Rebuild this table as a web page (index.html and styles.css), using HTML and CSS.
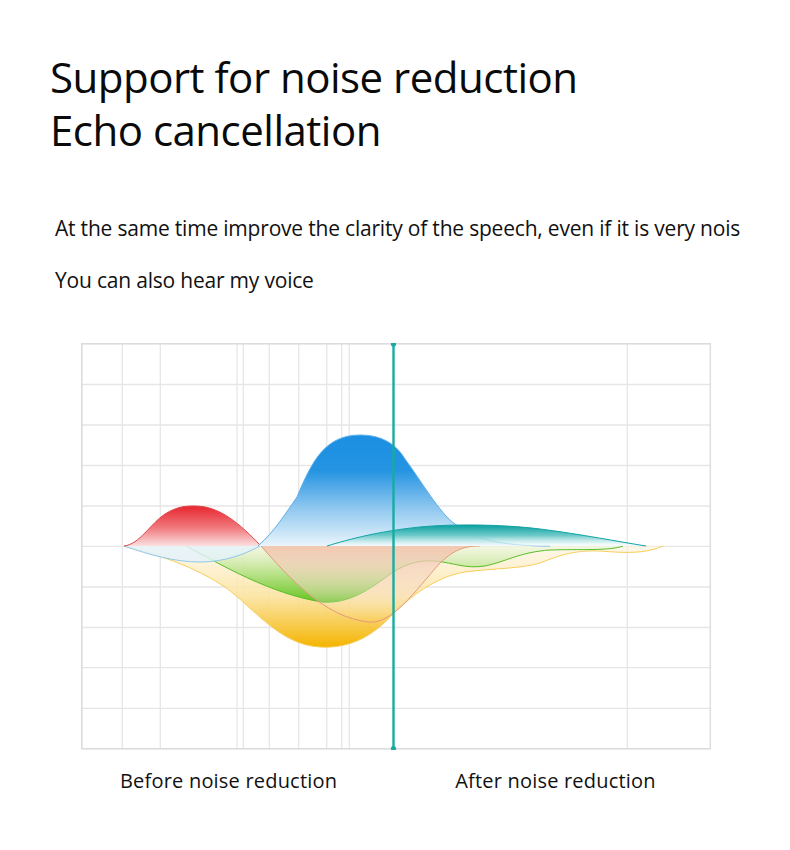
FILE: index.html
```html
<!DOCTYPE html>
<html lang="en">
<head>
<meta charset="utf-8">
<title>Noise reduction</title>
<link rel="stylesheet" href="styles.css">
</head>
<body>
<div class="page">
  <h1 class="title">Support for noise reduction<br>Echo cancellation</h1>
  <p class="lead first">At the same time improve the clarity of the speech, even if it is very nois</p>
  <p class="lead second">You can also hear my voice</p>
  <div class="chart">
    <svg width="630" height="407" viewBox="81 344 630 407" xmlns="http://www.w3.org/2000/svg">
      <defs>
        <linearGradient id="gRed" x1="0" y1="507" x2="0" y2="547" gradientUnits="userSpaceOnUse">
          <stop offset="0" stop-color="#e8262f"/>
          <stop offset="0.55" stop-color="#f07a7e"/>
          <stop offset="1" stop-color="#fbe0e0"/>
        </linearGradient>
        <linearGradient id="gPeach" x1="0" y1="547" x2="0" y2="622" gradientUnits="userSpaceOnUse">
          <stop offset="0" stop-color="#f2c3ac" stop-opacity="0.9"/>
          <stop offset="0.6" stop-color="#f6dccd" stop-opacity="0.45"/>
          <stop offset="1" stop-color="#fbeee6" stop-opacity="0"/>
        </linearGradient>
        <linearGradient id="gBlue" x1="0" y1="436" x2="0" y2="547" gradientUnits="userSpaceOnUse">
          <stop offset="0" stop-color="#1b8fe2"/>
          <stop offset="0.32" stop-color="#2494e2"/>
          <stop offset="0.65" stop-color="#8cc6ef"/>
          <stop offset="1" stop-color="#eaf5fc"/>
        </linearGradient>
        <linearGradient id="gTeal" x1="0" y1="526" x2="0" y2="547" gradientUnits="userSpaceOnUse">
          <stop offset="0" stop-color="#0a9fa0"/>
          <stop offset="0.5" stop-color="#6fcaca"/>
          <stop offset="1" stop-color="#ffffff" stop-opacity="0.6"/>
        </linearGradient>
        <linearGradient id="gGreen" x1="0" y1="547" x2="0" y2="603" gradientUnits="userSpaceOnUse">
          <stop offset="0" stop-color="#eaf6dc" stop-opacity="0.5"/>
          <stop offset="0.45" stop-color="#b9e38c" stop-opacity="0.9"/>
          <stop offset="1" stop-color="#66c522"/>
        </linearGradient>
        <linearGradient id="gYellow" x1="0" y1="547" x2="0" y2="648" gradientUnits="userSpaceOnUse">
          <stop offset="0" stop-color="#fdf3dc" stop-opacity="0.6"/>
          <stop offset="0.5" stop-color="#fbe39e" stop-opacity="0.9"/>
          <stop offset="1" stop-color="#f4b400"/>
        </linearGradient>
      </defs>

      <g class="grid">
        <line x1="81" y1="385.5" x2="710" y2="385.5"/>
        <line x1="81" y1="426" x2="710" y2="426"/>
        <line x1="81" y1="466.5" x2="710" y2="466.5"/>
        <line x1="81" y1="507" x2="710" y2="507"/>
        <line x1="81" y1="547.3" x2="710" y2="547.3"/>
        <line x1="81" y1="588" x2="710" y2="588"/>
        <line x1="81" y1="628.5" x2="710" y2="628.5"/>
        <line x1="81" y1="668.7" x2="710" y2="668.7"/>
        <line x1="81" y1="709.3" x2="710" y2="709.3"/>
        <line x1="122.3" y1="345" x2="122.3" y2="750"/>
        <line x1="160.3" y1="345" x2="160.3" y2="750"/>
        <line x1="237" y1="345" x2="237" y2="750"/>
        <line x1="243.3" y1="345" x2="243.3" y2="750"/>
        <line x1="269.3" y1="345" x2="269.3" y2="750"/>
        <line x1="298.7" y1="345" x2="298.7" y2="750"/>
        <line x1="326.7" y1="345" x2="326.7" y2="750"/>
        <line x1="341.7" y1="345" x2="341.7" y2="750"/>
        <line x1="349.3" y1="345" x2="349.3" y2="750"/>
        <line x1="627.3" y1="345" x2="627.3" y2="750"/>
        <rect class="frame" x="81.8" y="344.8" width="628.6" height="405"/>
      </g>

      <!-- yellow lobe -->
      <path fill="url(#gYellow)" d="M124,547 C160,556 195,568 225,588 C255,610 280,646 320,648 C352,650 375,635 393,615 C410,598 435,578 465,573 C495,569 520,570 540,564 C560,556 575,551 600,552 C625,554 645,555 663,547 Z"/>
      <path class="ln" stroke="#f5cf5c" d="M124,547 C160,556 195,568 225,588 C255,610 280,646 320,648 C352,650 375,635 393,615 C410,598 435,578 465,573 C495,569 520,570 540,564 C560,556 575,551 600,552 C625,554 645,555 663,547"/>

      <!-- green lobe -->
      <path fill="url(#gGreen)" d="M186,547 C220,565 270,595 322,603 C350,605 370,590 393,573 C408,564 420,561 435,562 C455,564 465,570 485,567 C505,563 520,553 550,551 C580,550 610,552 623,547 Z"/>
      <path class="ln" stroke="#58be2a" stroke-width="1.3" d="M186,547 C220,565 270,595 322,603 C350,605 370,590 393,573 C408,564 420,561 435,562 C455,564 465,570 485,567 C505,563 520,553 550,551 C580,550 610,552 623,547"/>

      <!-- red negative lobe -->
      <path fill="url(#gPeach)" d="M261,547 C290,580 325,618 368,623 C392,626 415,592 440,564 C455,550 465,547 480,547 Z"/>
      <path class="ln" stroke="#e59a7c" d="M261,547 C290,580 325,618 368,623 C392,626 415,592 440,564 C455,550 465,547 480,547"/>

      <!-- blue under baseline -->
      <path fill="#e3f2fb" fill-opacity="0.8" d="M124,547 C150,556 175,563 200,563 C225,563 245,555 260,547 Z"/>
      <path class="ln" stroke="#8fc9ee" d="M124,547 C150,556 175,563 200,563 C225,563 245,555 260,547"/>

      <!-- red positive lobe -->
      <path fill="url(#gRed)" d="M124,547 C140,545 150,525 165,515 C178,507 186,507 195,507 C220,507 240,525 261,547 Z"/>
      <path class="ln" stroke="#e0464c" stroke-width="1.2" d="M124,547 C140,545 150,525 165,515 C178,507 186,507 195,507 C220,507 240,525 261,547"/>

      <!-- blue lobe -->
      <path fill="url(#gBlue)" d="M258,547 C275,532 285,515 297,498 C312,462 325,436 360,436 C385,436 398,448 405,460 C420,480 440,515 455,525 C475,540 500,547 550,547 Z"/>
      <path class="ln" stroke="#5eb0ea" d="M258,547 C275,532 285,515 297,498 C312,462 325,436 360,436 C385,436 398,448 405,460 C420,480 440,515 455,525 C475,540 500,547 550,547"/>

      <!-- teal lobe -->
      <path fill="url(#gTeal)" d="M327,547 C350,540 380,532 420,528 C450,525 500,525 540,530 C580,535 620,543 646,547 Z"/>
      <path class="ln" stroke="#10a3a3" stroke-width="1.4" d="M327,547 C350,540 380,532 420,528 C450,525 500,525 540,530 C580,535 620,543 646,547"/>

      <!-- divider -->
      <line class="divider" x1="393.5" y1="345" x2="393.5" y2="750"/>
      <circle class="dot" cx="393.5" cy="345" r="2.6"/>
      <circle class="dot" cx="393.5" cy="749.5" r="2.6"/>
    </svg>
  </div>
  <div class="labels">
    <span class="label before">Before noise reduction</span>
    <span class="label after">After noise reduction</span>
  </div>
</div>
</body>
</html>
```

FILE: styles.css
```css
html, body {
  margin: 0;
  padding: 0;
  background: #ffffff;
}

body {
  font-family: "Open Sans", "Noto Sans", sans-serif;
  color: #111111;
}

.page {
  width: 790px;
  height: 850px;
  overflow: hidden;
}

.title {
  margin: 50px 0 0 0;
  padding-left: 50px;
  font-size: 42px;
  line-height: 53px;
  font-weight: 400;
  letter-spacing: -0.5px;
  color: #0a0a0a;
}

.lead {
  margin: 0;
  padding-left: 55px;
  font-size: 21px;
  line-height: 30px;
  letter-spacing: -0.2px;
  white-space: nowrap;
  color: #111111;
}

.lead.first {
  margin-top: 57px;
}

.lead.second {
  margin-top: 22px;
}

.chart {
  margin-top: 48px;
  padding-left: 81px;
  height: 407px;
}

.chart svg {
  display: block;
}

.grid line {
  stroke: #e6e6e6;
  stroke-width: 1.3;
}

.grid .frame {
  fill: none;
  stroke: #dcdcdc;
  stroke-width: 1.6;
}

.ln {
  fill: none;
  stroke-width: 1;
}

.divider {
  stroke: #19aba3;
  stroke-width: 2.4;
}

.dot {
  fill: #19aba3;
}

.labels {
  display: flex;
  margin-top: 17px;
  font-size: 20px;
  line-height: 28px;
  letter-spacing: 0.2px;
  color: #111111;
}

.label.before {
  margin-left: 120px;
}

.label.after {
  margin-left: 118px;
}
```
